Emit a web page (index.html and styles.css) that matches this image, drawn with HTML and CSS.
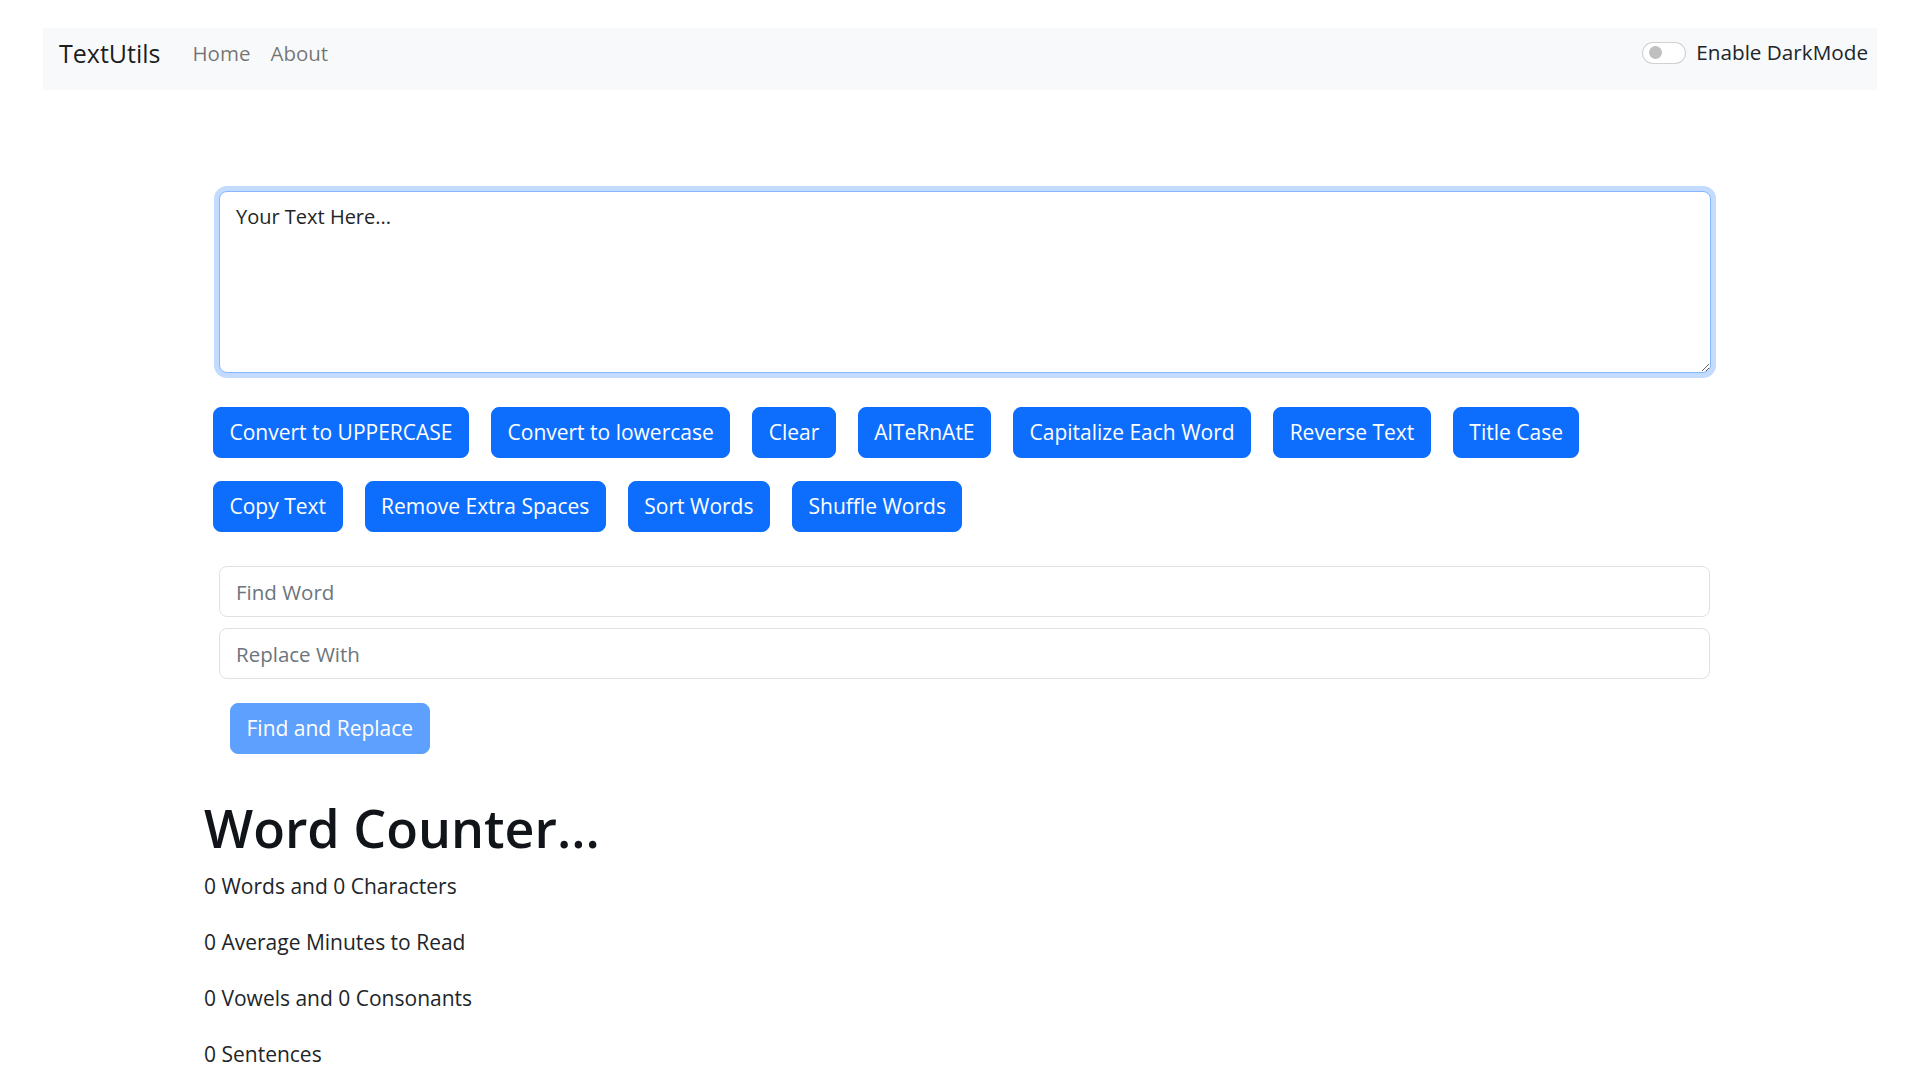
FILE: index.html
```html
<!DOCTYPE html>
<html lang="en">
<head>
<meta charset="utf-8">
<title>TextUtils</title>
<link rel="stylesheet" href="styles.css">
</head>
<body>
<nav class="navbar">
  <a class="brand" href="#">TextUtils</a>
  <ul class="nav-links">
    <li><a href="#">Home</a></li>
    <li><a href="#">About</a></li>
  </ul>
  <label class="switch">
    <span class="switch-track"><span class="switch-knob"></span></span>
    <span class="switch-label">Enable DarkMode</span>
  </label>
</nav>

<main class="main">
  <textarea class="text-box" rows="8">Your Text Here...</textarea>

  <div class="btn-group">
    <div class="btn-row">
      <button class="btn">Convert to UPPERCASE</button>
      <button class="btn">Convert to lowercase</button>
      <button class="btn">Clear</button>
      <button class="btn">AlTeRnAtE</button>
      <button class="btn">Capitalize Each Word</button>
      <button class="btn">Reverse Text</button>
      <button class="btn">Title Case</button>
    </div>
    <div class="btn-row">
      <button class="btn">Copy Text</button>
      <button class="btn">Remove Extra Spaces</button>
      <button class="btn">Sort Words</button>
      <button class="btn">Shuffle Words</button>
    </div>
  </div>

  <div class="replace">
    <input class="field" type="text" placeholder="Find Word">
    <input class="field" type="text" placeholder="Replace With">
    <button class="btn btn-disabled">Find and Replace</button>
  </div>

  <section class="summary">
    <h1 class="summary-title">Word Counter...</h1>
    <p class="stat">0 Words and 0 Characters</p>
    <p class="stat">0 Average Minutes to Read</p>
    <p class="stat">0 Vowels and 0 Consonants</p>
    <p class="stat">0 Sentences</p>
  </section>
</main>
</body>
</html>
```

FILE: styles.css
```css
* { box-sizing: border-box; }

html, body {
  margin: 0;
  background: #ffffff;
  color: #212529;
  font-family: "Open Sans", "Noto Sans", sans-serif;
  font-size: 21px;
  line-height: 1.5;
  overflow: hidden;
}

a { text-decoration: none; }

.navbar {
  margin: 28px 43px 0 43px;
  height: 62px;
  background: #f8f9fa;
  display: flex;
  align-items: center;
  padding: 0 9px 12px 16px;
}

.brand {
  font-size: 25px;
  color: rgba(0, 0, 0, 0.9);
  margin-right: 22px;
  line-height: 1;
}

.nav-links {
  list-style: none;
  margin: 0;
  padding: 0;
  display: flex;
  flex: 1;
}

.nav-links a {
  display: block;
  padding: 0 10px;
  color: rgba(0, 0, 0, 0.55);
  font-size: 20.5px;
}

.switch {
  display: flex;
  align-items: center;
  gap: 10px;
}

.switch-track {
  width: 44px;
  height: 22px;
  border: 1px solid rgba(0, 0, 0, 0.18);
  border-radius: 11px;
  background: #ffffff;
  display: flex;
  align-items: center;
  padding-left: 6px;
}

.switch-knob {
  width: 13px;
  height: 13px;
  border-radius: 50%;
  background: #bfbfbf;
}

.switch-label {
  font-size: 20.7px;
  color: #212529;
}

.main {
  margin-left: 204px;
  width: 1516px;
  padding-top: 101px;
}

.text-box {
  display: block;
  margin-left: 15px;
  width: 1492px;
  height: 182px;
  padding: 10px 16px;
  font-family: inherit;
  font-size: 20px;
  line-height: 1.5;
  color: #212529;
  border: 1px solid #86b7fe;
  border-radius: 8px;
  box-shadow: 0 0 0 5px rgba(13, 110, 253, 0.25);
  outline: none;
  resize: vertical;
}

.btn-group {
  margin: 34px 0 0 9px;
  display: flex;
  flex-direction: column;
  gap: 23px;
}

.btn-row {
  display: flex;
  gap: 22px;
}

.btn {
  height: 51px;
  padding: 0 15.5px;
  border: 1px solid #0d6efd;
  border-radius: 8px;
  background: #0d6efd;
  color: #ffffff;
  font-family: inherit;
  font-size: 21px;
  line-height: 1;
}

.replace {
  margin: 34px 0 0 15px;
  display: flex;
  flex-direction: column;
  align-items: flex-start;
}

.field {
  width: 1491px;
  height: 51px;
  padding: 0 16px;
  border: 1px solid #dee2e6;
  border-radius: 8px;
  font-family: inherit;
  font-size: 20.5px;
  color: #212529;
  margin-bottom: 11px;
}

.field::placeholder { color: #6c757d; }

.btn-disabled {
  margin-top: 13px;
  margin-left: 11px;
  height: 51px;
  background: #5ea0fe;
  border-color: #5ea0fe;
}

.summary { margin-top: 43px; }

.summary-title {
  margin: 0 0 12px 0;
  font-size: 52px;
  font-weight: 600;
  line-height: 1.2;
  color: #111418;
}

.stat {
  margin: 0 0 24.5px 0;
  font-size: 21px;
  line-height: 1.5;
}
```
